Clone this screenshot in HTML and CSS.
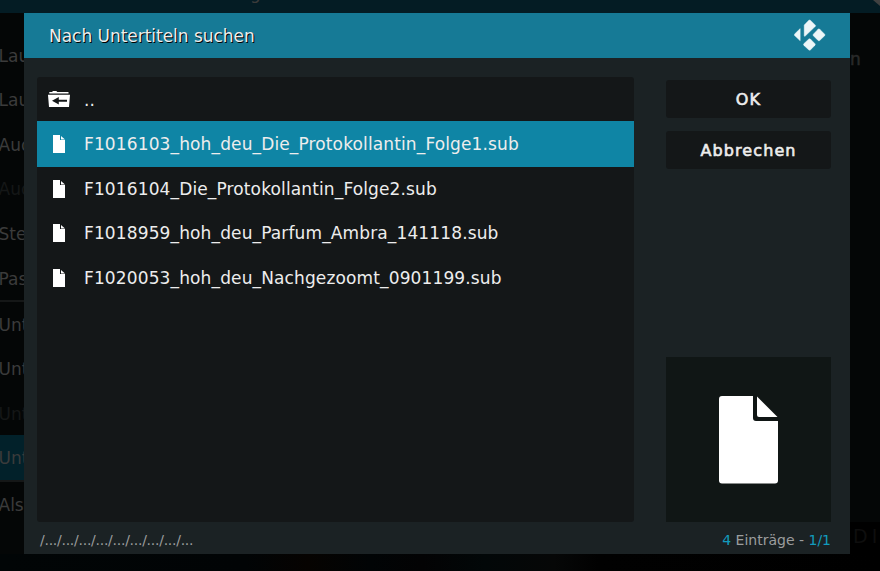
FILE: index.html
```html
<!DOCTYPE html>
<html lang="de">
<head>
<meta charset="utf-8">
<title>Nach Untertiteln suchen</title>
<link rel="stylesheet" href="styles.css">
</head>
<body>
<svg class="defs" width="0" height="0">
  <symbol id="file" viewBox="0 0 12 18"><path d="M0 0H7V5H12V18H0Z"/><path d="M8 1L12 4.4H8Z"/></symbol>
</svg>
<div class="page">
  <div class="page-bar"><span class="page-title">g</span><i class="corner"></i></div>
  <div class="page-body">
    <div class="menu">
      <div class="item">Lau</div>
      <div class="item">Lau</div>
      <div class="item">Aud</div>
      <div class="item off">Aud</div>
      <div class="item">Ste</div>
      <div class="item">Pas</div>
      <div class="line"></div>
      <div class="item">Unt</div>
      <div class="item">Unt</div>
      <div class="item off">Unt</div>
      <div class="item active">Unt</div>
      <div class="line"></div>
      <div class="item">Als</div>
    </div>
    <div class="side"><span class="side-top">n</span><span class="side-end">DI</span></div>
  </div>
  <div class="page-foot"></div>
</div>
<div class="dialog">
  <header class="head">
    <h1>Nach Untertiteln suchen</h1>
    <svg class="logo" width="32" height="32" viewBox="0 0 32 32">
      <path d="M6.2 9.6V21.8L.6 16.6Q0 15.8.6 15Z"/>
      <path d="M10.2 16.8V6.1L14.8 1.2Q15.6.6 16.4 1.2L21.4 6.2Q21.8 6.8 21.4 7.3L11 17.3Q10.3 17.5 10.2 16.8Z"/>
      <path d="M24.1 10.2Q24.9 9.5 25.7 10.2L30.7 15.2Q31.3 16 30.7 16.7L25.7 21.5Q24.9 22.1 24.1 21.5L19.3 16.7Q18.7 16 19.3 15.2Z"/>
      <path d="M14.8 20Q15.6 19.4 16.4 20L21 24.7Q21.6 25.5 21 26.3L16.4 30.9Q15.6 31.5 14.8 30.9L9.8 26.3Q9.2 25.5 9.8 24.7Z"/>
    </svg>
  </header>
  <div class="content">
    <div class="list">
      <div class="row parent">
        <span class="icon"><svg width="22" height="16" viewBox="0 0 22 16"><path d="M1.3 2V1H4L5 0H8.3L9.3 1H20.5V2.4H1.3Z"/><path fill-rule="evenodd" d="M0 3.7H22L21 16H1L0 4ZM4 9.7L10.8 13.6V10.7H19V8.8H10.8V5.9Z"/></svg></span>
        <span class="name">..</span>
      </div>
      <div class="row selected"><span class="icon"><svg width="12" height="18"><use href="#file"/></svg></span><span class="name">F1016103_hoh_deu_Die_Protokollantin_Folge1.sub</span></div>
      <div class="row"><span class="icon"><svg width="12" height="18"><use href="#file"/></svg></span><span class="name">F1016104_Die_Protokollantin_Folge2.sub</span></div>
      <div class="row"><span class="icon"><svg width="12" height="18"><use href="#file"/></svg></span><span class="name">F1018959_hoh_deu_Parfum_Ambra_141118.sub</span></div>
      <div class="row"><span class="icon"><svg width="12" height="18"><use href="#file"/></svg></span><span class="name">F1020053_hoh_deu_Nachgezoomt_0901199.sub</span></div>
    </div>
    <div class="actions">
      <button>OK</button>
      <button>Abbrechen</button>
      <div class="preview">
        <svg width="59" height="88" viewBox="0 0 59 88"><path d="M3 0H34V22Q34 25 37 25H59V84.5Q59 87.5 56 87.5H3Q0 87.5 0 84.5V3Q0 0 3 0Z"/><path d="M38 .5L58.5 21H40Q38 21 38 19Z"/></svg>
      </div>
    </div>
  </div>
  <footer class="foot"><span class="path">/.../.../.../.../.../.../.../.../...</span><span class="count"><b>4</b> Einträge - <b>1/1</b></span></footer>
</div>
</body>
</html>
```
FILE: styles.css
```css
* { box-sizing: border-box; }
body {
  margin: 0;
  width: 880px;
  height: 571px;
  overflow: hidden;
  position: relative;
  background: #000;
  font: 17px/20px "DejaVu Sans", sans-serif;
}
svg { display: block; fill: #fff; }
.defs { position: absolute; }

.page { height: 571px; display: flex; flex-direction: column; color: #3b3b3b; }
.page-bar {
  height: 13px;
  background: #041c24;
  display: flex;
  justify-content: space-between;
  overflow: hidden;
}
.page-title { margin: -17px 0 0 250px; }
.corner { width: 7px; height: 6px; background: #414141; clip-path: polygon(0 0, 100% 0, 100% 100%); }
.page-body { flex: 1; display: flex; justify-content: space-between; background: #040606; }
.menu { width: 40px; padding-top: 19.6px; }
.item { height: 44.6px; line-height: 46px; text-indent: -1.5px; }
.item.off { color: #151717; }
.item.active { background: #02212a; }
.line { height: 1.5px; background: #151717; }
.side { width: 30px; display: flex; flex-direction: column; justify-content: space-between; padding-top: 36px; }
.side-top { -webkit-text-stroke: .5px; color: #292a2a; }
.side-end { height: 32px; padding: 4px 0 0 3px; background: #000; color: #0e0e0e; font-size: 19px; letter-spacing: 4px; white-space: nowrap; }
.page-foot { height: 17px; background: linear-gradient(90deg, #010506 0, #010405 28%, #060301 35%, #010405 42%, #030304 48%, #020708 55%, #060707 63%, #010101 68%, #000 100%); }

.dialog {
  position: absolute;
  left: 24px;
  top: 13px;
  width: 826px;
  height: 541px;
  background: #1b2224;
  display: flex;
  flex-direction: column;
  color: #ededed;
}
.head {
  height: 45px;
  padding: 0 25px;
  display: flex;
  align-items: center;
  justify-content: space-between;
  background: #167a96;
}
.head h1 { margin: 0; font-size: 17px; font-weight: 400; letter-spacing: -.03px; text-shadow: 1px 1px 0 #000; }
.logo { fill: #edf6f8; stroke: #edf6f8; stroke-width: .4; margin: 0 -.5px 1px 0; }
.content { height: 464px; padding: 19px 19px 0 13px; display: flex; justify-content: space-between; }
.list { width: 597px; height: 445px; background: #141718; border-radius: 3px; }
.row { height: 44.6px; display: flex; align-items: center; }
.row.selected { height: 45.6px; margin: -.6px 0 -.4px; background: #0f85a5; }
.parent .name { padding-top: 2px; }
.icon { width: 44px; display: flex; justify-content: center; }
.name { margin-left: 3px; white-space: nowrap; letter-spacing: .13px; }
.actions { width: 165px; height: 445px; padding-top: 3px; display: flex; flex-direction: column; gap: 13px; }
button {
  height: 38px;
  padding: 1px 0 0;
  border: 0;
  border-radius: 3px;
  background: #141718;
  color: #ededed;
  font: 16px/20px "DejaVu Sans", sans-serif;
  letter-spacing: 1.1px;
  -webkit-text-stroke: .6px;
}
.preview { height: 165px; margin-top: auto; background: #101615; display: flex; align-items: center; justify-content: center; }
.foot { height: 32px; padding: 4px 19px 0 16px; display: flex; justify-content: space-between; align-items: center; font-size: 14px; line-height: 24px; color: #9b9d9e; }
.foot b { font-weight: 400; color: #129bbe; }
.path { letter-spacing: -.26px; }
```
